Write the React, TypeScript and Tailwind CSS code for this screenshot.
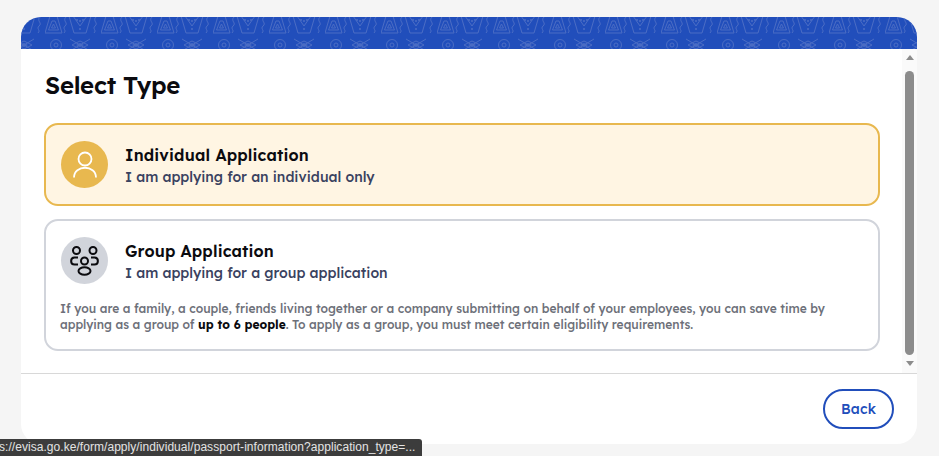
const font = "font-['Lexend','Lato','Noto_Sans',sans-serif]";

function Banner() {
  return (
    <svg className="block h-8 w-full shrink-0" aria-hidden="true">
      <defs>
        <pattern id="tribal" x="24" y="0" width="56" height="32" patternUnits="userSpaceOnUse">
          <g fill="none" stroke="#4a6cc4" strokeWidth="1">
            <path d="M5 -1 L12 -1 L17 16 L0 16 Z" />
            <path d="M7 4 L10 4 L13.500 13 L3.500 13 Z" />
            <path d="M8.500 7 L10.500 11 L6.500 11 Z" />
            <path d="M24 -1 L29 16 L41 16 L46 -1" />
            <path d="M28 -1 L35 9 L42 -1" />
            <path d="M21 0 C17 4 24 6 20 9 C17 12 22 13 19 16" />
            <path d="M51 0 C47 4 54 6 50 9 C47 12 52 13 49 16" />
            <circle cx="11" cy="28" r="5.500" />
            <circle cx="11" cy="28" r="2" />
            <path d="M25 22 L45 34 M45 22 L25 34" />
            <path d="M27 28 L35 24 L43 28 L35 32 Z" />
          </g>
          <g fill="#4a6cc4">
            <path d="M31 28 L35 26 L39 28 L35 30 Z" />
            <circle cx="32" cy="3" r="1" />
            <circle cx="38" cy="3" r="1" />
            <circle cx="35" cy="4" r="1" />
            <circle cx="35" cy="12" r="1" />
          </g>
        </pattern>
      </defs>
      <rect width="100%" height="32" fill="#214ebb" />
      <rect width="100%" height="32" fill="url(#tribal)" />
    </svg>
  );
}

function PersonIcon() {
  return (
    <svg width="26" height="28" viewBox="0 0 26 28" fill="none" stroke="#fff" strokeWidth="1.800" aria-hidden="true">
      <circle cx="13" cy="8" r="6.500" />
      <path d="M2 26.500 C2 13.500 24 13.500 24 26.500" />
    </svg>
  );
}

function GroupIcon() {
  return (
    <svg width="30" height="31" viewBox="0 0 30 31" fill="none" stroke="#0b0b0f" strokeWidth="2" aria-hidden="true">
      <circle cx="6.500" cy="5.500" r="3.500" />
      <circle cx="23" cy="5.500" r="3.500" />
      <circle cx="14.500" cy="16" r="3.500" />
      <path d="M8 12.500 H4.500 C0 12.500 0 19.500 4.500 19.500 H8" />
      <path d="M21 12.500 H24.500 C29 12.500 29 19.500 24.500 19.500 H21" />
      <ellipse cx="14.500" cy="26" rx="6" ry="3.700" />
    </svg>
  );
}

export default function App() {
  return (
    <div className={`relative h-[456px] w-[939px] overflow-hidden bg-[#f5f5f5] pt-[17px] pl-[21px] ${font}`}>
      <div className="flex h-[427px] w-[896px] flex-col overflow-hidden rounded-[20px] bg-white">
        <Banner />
        <div className="flex h-[324px] shrink-0">
          <div className="flex-1 pt-[20px] pr-[22px] pl-[23px]">
            <h1 className="pl-px text-[24px] leading-[32px] font-semibold tracking-[-0.25px] text-[#0b0b0f]">Select Type</h1>
            <div className="mt-[22px] flex h-[83px] items-center gap-[17px] rounded-[14px] border-2 border-[#e8b84f] bg-[#fff5e3] pl-[15px]">
              <div className="flex size-[47px] items-center justify-center rounded-full bg-[#e8b84f]">
                <PersonIcon />
              </div>
              <div className="pt-[3px]">
                <div className="text-[16px] leading-[22px] font-semibold tracking-[0.15px] text-[#0b0b0f]">Individual Application</div>
                <div className="text-[14px] leading-[22px] font-medium text-[#3a4260]">I am applying for an individual only</div>
              </div>
            </div>
            <div className="mt-[13px] flex h-[132px] flex-col rounded-[14px] border-2 border-[#d1d4db] pt-[16px] pl-[15px]">
              <div className="flex items-center gap-[17px]">
                <div className="flex size-[47px] items-center justify-center rounded-full bg-[#d1d4db]">
                  <GroupIcon />
                </div>
                <div className="pt-[3px]">
                  <div className="text-[16px] leading-[22px] font-semibold tracking-[0.15px] text-[#0b0b0f]">Group Application</div>
                  <div className="text-[14px] leading-[22px] font-medium text-[#3a4260]">I am applying for a group application</div>
                </div>
              </div>
              <p className="mt-[17px] ml-[-1px] text-[12px] leading-[16px] font-medium text-[#6d7079]">
                If you are a family, a couple, friends living together or a company submitting on behalf of your employees, you can save time by
                <br />
                applying as a group of <b className="font-bold text-[#0b0b0f]">up to 6 people</b>. To apply as a group, you must meet certain eligibility requirements.
              </p>
            </div>
          </div>
          <div className="flex w-[15px] flex-col items-center bg-[#fafafa] pt-[6px] pb-[7px]">
            <div className="size-0 border-x-[4.500px] border-b-[5px] border-x-transparent border-b-[#8c8c8c]" />
            <div className="mt-[11px] w-[9px] flex-1 rounded-[5px] bg-[#8c8c8c]" />
            <div className="mt-[6px] size-0 border-x-[4.500px] border-t-[5px] border-x-transparent border-t-[#8c8c8c]" />
          </div>
        </div>
        <div className="flex flex-1 items-start justify-end border-t border-[#d8d8d8] pt-[15px] pr-[23px]">
          <button className="h-10 w-[71px] rounded-full border-2 border-[#214ebb] text-[14px] font-medium tracking-[0.2px] text-[#214ebb]">
            Back
          </button>
        </div>
      </div>
      <div className="absolute bottom-0 left-0 h-[17px] w-[422px] overflow-hidden rounded-tr-[3px] bg-[#3c3c3c] font-['Liberation_Sans',sans-serif] text-[12px] leading-[17px] tracking-[0.05px] whitespace-nowrap text-[#e4e4e4]">
        <span className="ml-[-1px]">s://evisa.go.ke/form/apply/individual/passport-information?application_type=...</span>
      </div>
    </div>
  );
}
